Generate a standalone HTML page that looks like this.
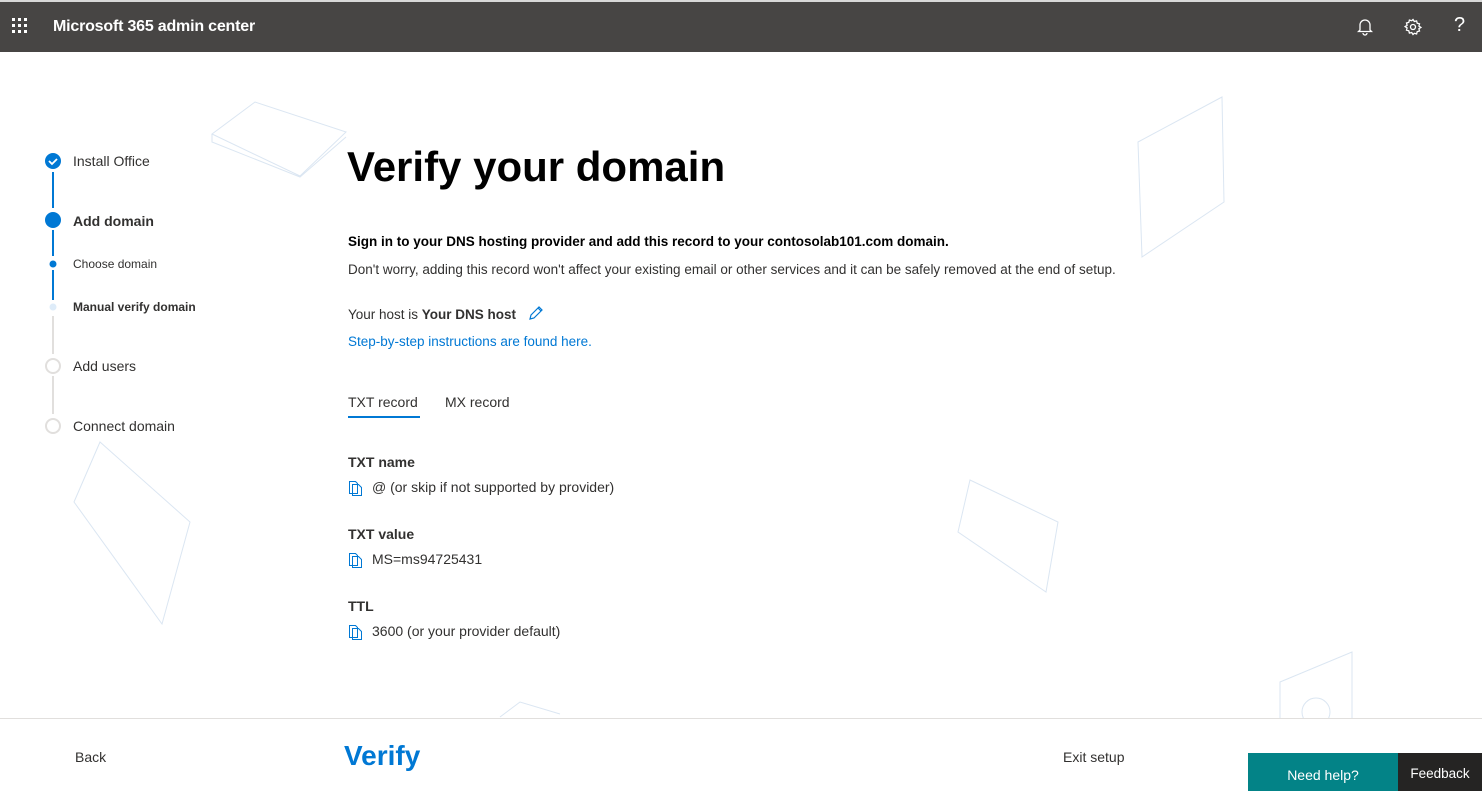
<!DOCTYPE html><html><head><style>
body{margin:0;width:1482px;height:791px;overflow:hidden;font-family:"Liberation Sans",sans-serif;background:#fff;position:relative;color:#323130}
.hdr{position:absolute;top:0;left:0;width:1482px;height:52px;background:#474544;border-top:2px solid #d8d8d8;box-sizing:border-box}
.a{position:absolute}
.t{font-size:14px;color:#323130}
.copy{display:inline-block;vertical-align:middle;margin-right:8px}
</style></head><body>
<div class="hdr">
<svg class="a" style="left:12px;top:16px" width="16" height="16" fill="#fff"><g><rect x="0" y="0" width="3" height="3"/><rect x="6" y="0" width="3" height="3"/><rect x="12" y="0" width="3" height="3"/><rect x="0" y="6" width="3" height="3"/><rect x="6" y="6" width="3" height="3"/><rect x="12" y="6" width="3" height="3"/><rect x="0" y="12" width="3" height="3"/><rect x="6" y="12" width="3" height="3"/><rect x="12" y="12" width="3" height="3"/></g></svg>
<div class="a" style="left:53px;top:16px;color:#fff;font-size:16px;font-weight:bold;letter-spacing:-0.2px">Microsoft 365 admin center</div>
<svg class="a" style="left:1357px;top:16px" width="16" height="18" fill="none" stroke="#fff" stroke-width="1.3"><path d="M3 12V7a5 5 0 0 1 10 0v5l1.5 1.5h-13z M6 15a2 2 0 0 0 4 0"/></svg>
<svg class="a" style="left:1404px;top:16px" width="18" height="18" fill="none" stroke="#fff" stroke-width="1.3"><circle cx="9" cy="9" r="2.5"/><path d="M9 1.5l1.3 2 2.3-.6.6 2.3 2.3.6-.6 2.3 2 1.3-2 1.3.6 2.3-2.3.6-.6 2.3-2.3-.6L9 16.5l-1.3-2-2.3.6-.6-2.3-2.3-.6.6-2.3-2-1.3 2-1.3-.6-2.3 2.3-.6.6-2.3 2.3.6z"/></svg>
<div class="a" style="left:1454px;top:12px;color:#fff;font-size:20px">?</div>
</div>

<svg class="a" style="left:0;top:52px" width="1482" height="666" fill="none" stroke="#dbe6f2" stroke-width="1">
<path d="M212 82L255 50 346 80 300 124z M212 82l0 8 88 35 46-40"/>
<path d="M1138 90L1222 45 1224 150 1142 205z"/>
<path d="M958 480L970 428 1058 470 1046 540z"/>
<path d="M74 450L100 390 190 470 162 572z"/>
<path d="M1280 630l72-30 0 70 -72 0z"/><circle cx="1316" cy="660" r="14"/>
<path d="M500 665l20-15 40 12"/>
</svg>

<svg class="a" style="left:40px;top:148px" width="30" height="290">
<line x1="13" y1="24" x2="13" y2="60" stroke="#0078d4" stroke-width="2"/>
<line x1="13" y1="82" x2="13" y2="108" stroke="#0078d4" stroke-width="2"/>
<line x1="13" y1="122" x2="13" y2="152" stroke="#0078d4" stroke-width="2"/>
<line x1="13" y1="168" x2="13" y2="206" stroke="#e1dfdd" stroke-width="2"/>
<line x1="13" y1="228" x2="13" y2="266" stroke="#e1dfdd" stroke-width="2"/>
<circle cx="13" cy="13" r="8" fill="#0078d4"/><path d="M9 13l3 3 5-5" stroke="#fff" stroke-width="1.8" fill="none"/>
<circle cx="13" cy="72" r="8" fill="#0078d4"/>
<circle cx="13" cy="116" r="3.5" fill="#0078d4"/>
<circle cx="13" cy="159" r="3.5" fill="#deecf9"/>
<circle cx="13" cy="218" r="7" fill="none" stroke="#e1dfdd" stroke-width="2"/>
<circle cx="13" cy="278" r="7" fill="none" stroke="#e1dfdd" stroke-width="2"/>
</svg>
<div class="a t" style="left:73px;top:153px">Install Office</div>
<div class="a t" style="left:73px;top:213px;font-weight:bold">Add domain</div>
<div class="a" style="left:73px;top:257px;font-size:12px">Choose domain</div>
<div class="a" style="left:73px;top:300px;font-size:12px;font-weight:bold">Manual verify domain</div>
<div class="a t" style="left:73px;top:358px">Add users</div>
<div class="a t" style="left:73px;top:418px">Connect domain</div>

<div class="a" style="left:347px;top:143px;font-size:42px;font-weight:bold;color:#000">Verify your domain</div>
<div class="a" style="left:348px;top:234px;font-size:13.5px;font-weight:bold;color:#000">Sign in to your DNS hosting provider and add this record to your contosolab101.com domain.</div>
<div class="a" style="left:348px;top:262px;font-size:13.5px">Don't worry, adding this record won't affect your existing email or other services and it can be safely removed at the end of setup.</div>
<div class="a" style="left:348px;top:307px;font-size:13.5px">Your host is <b>Your DNS host</b></div>
<svg class="a" style="left:528px;top:305px" width="16" height="16" fill="none" stroke="#0078d4" stroke-width="1.2"><path d="M2 14l1-4 8-8 3 3-8 8z M10 3l3 3"/></svg>
<div class="a" style="left:348px;top:334px;font-size:13.5px;color:#0078d4">Step-by-step instructions are found here.</div>
<div class="a t" style="left:348px;top:394px">TXT record</div>
<div class="a" style="left:348px;top:416px;width:72px;height:2px;background:#0078d4"></div>
<div class="a t" style="left:445px;top:394px">MX record</div>

<div class="a t" style="left:348px;top:454px;font-weight:bold">TXT name</div>
<div class="a t" style="left:348px;top:479px"><svg class="copy" width="16" height="16" fill="none" stroke="#0078d4"><path d="M1.5 1.5h6l2 2v10h-8z M4.5 4.5h6l3 3v8h-9z"/></svg>@ (or skip if not supported by provider)</div>
<div class="a t" style="left:348px;top:526px;font-weight:bold">TXT value</div>
<div class="a t" style="left:348px;top:551px"><svg class="copy" width="16" height="16" fill="none" stroke="#0078d4"><path d="M1.5 1.5h6l2 2v10h-8z M4.5 4.5h6l3 3v8h-9z"/></svg>MS=ms94725431</div>
<div class="a t" style="left:348px;top:598px;font-weight:bold">TTL</div>
<div class="a t" style="left:348px;top:623px"><svg class="copy" width="16" height="16" fill="none" stroke="#0078d4"><path d="M1.5 1.5h6l2 2v10h-8z M4.5 4.5h6l3 3v8h-9z"/></svg>3600 (or your provider default)</div>

<div class="a" style="left:0;top:718px;width:1482px;height:1px;background:#e1dfdd"></div>
<div class="a t" style="left:75px;top:749px">Back</div>
<div class="a" style="left:344px;top:740px;font-size:28px;font-weight:bold;color:#0078d4">Verify</div>
<div class="a t" style="left:1063px;top:749px">Exit setup</div>
<div class="a" style="left:1248px;top:753px;width:150px;height:38px;background:#038387;color:#fff;font-size:14px;line-height:44px;text-align:center">Need help?</div>
<div class="a" style="left:1398px;top:753px;width:84px;height:38px;background:#252423;color:#fff;font-size:13.5px;line-height:42px;text-align:center">Feedback</div>
</body></html>
